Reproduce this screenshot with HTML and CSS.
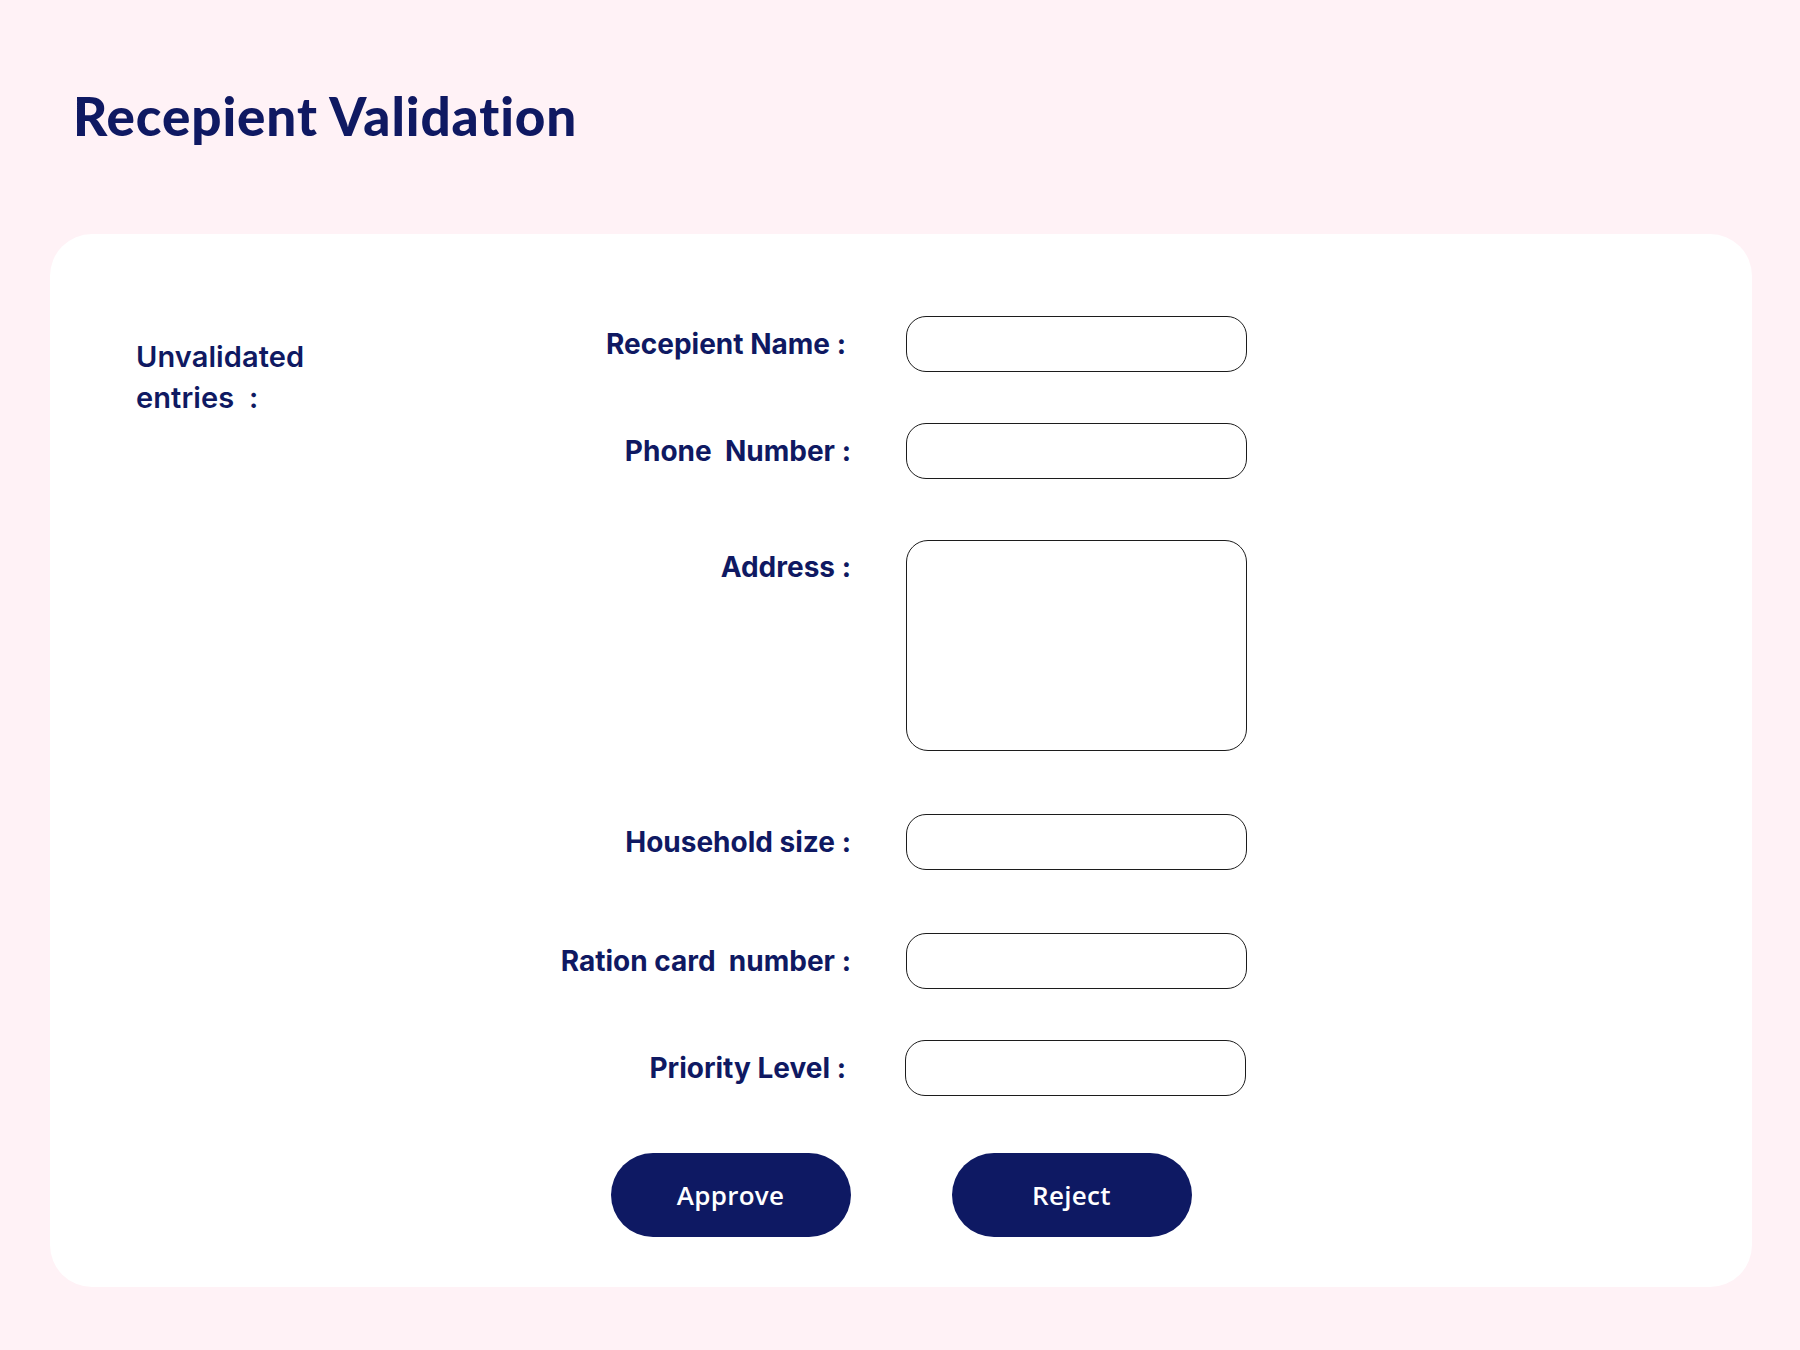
FILE: index.html
```html
<!DOCTYPE html>
<html lang="en">
<head>
<meta charset="utf-8">
<title>Recepient Validation</title>
<link rel="stylesheet" href="styles.css">
</head>
<body>
<div class="page">
  <header class="header">
    <h1 class="title">Recepient Validation</h1>
  </header>
  <main class="card">
    <div class="card-body">
      <div class="side">
        <p class="side-label">Unvalidated<br>entries&nbsp;&nbsp;:</p>
      </div>
      <form class="form">
        <div class="field">
          <label class="label">Recepient Name :</label>
          <input class="box" type="text">
        </div>
        <div class="field">
          <label class="label label-in">Phone&nbsp; Number :</label>
          <input class="box" type="text">
        </div>
        <div class="field field-top">
          <label class="label label-in">Address :</label>
          <textarea class="box box-area"></textarea>
        </div>
        <div class="field field-wide">
          <label class="label label-in">Household size :</label>
          <input class="box" type="text">
        </div>
        <div class="field field-wide">
          <label class="label label-in">Ration card&nbsp; number :</label>
          <input class="box" type="text">
        </div>
        <div class="field">
          <label class="label">Priority Level :</label>
          <input class="box box-shift" type="text">
        </div>
      </form>
    </div>
    <div class="actions">
      <button class="btn" type="button">Approve</button>
      <button class="btn" type="button">Reject</button>
    </div>
  </main>
</div>
</body>
</html>
```
FILE: styles.css
```css
* {
  box-sizing: border-box;
}

html, body {
  margin: 0;
  padding: 0;
}

body {
  background: #fff2f6;
  color: #0f1962;
  font-family: "Inter", "Liberation Sans", sans-serif;
}

.page {
  width: 1800px;
  min-height: 1350px;
  padding: 0 48px 63px 50px;
}

.header {
  height: 234px;
  padding-top: 85px;
}

.title {
  margin: 0 0 0 23px;
  font-family: "Lato", "Liberation Sans", sans-serif;
  font-weight: 900;
  font-size: 53px;
  line-height: 62px;
  color: #0f1962;
  letter-spacing: 0.9px;
}

.card {
  background: #ffffff;
  border-radius: 42px;
  height: 1053px;
  padding: 82px 0 0 86px;
}

.card-body {
  display: flex;
}

.side {
  width: 360px;
  flex: none;
  padding-top: 20px;
}

.side-label {
  margin: 0;
  font-size: 29px;
  font-weight: 600;
  line-height: 41px;
  letter-spacing: 0.1px;
}

.form {
  display: flex;
  flex-direction: column;
}

.field {
  display: grid;
  grid-template-columns: 352px 341px;
  column-gap: 58px;
  align-items: center;
  margin-top: 51px;
}

.field:first-child {
  margin-top: 0;
}

.field-wide {
  margin-top: 63px;
}

.field-top {
  align-items: start;
  margin-top: 61px;
}

.field-top .label {
  margin-top: 10px;
}

.label {
  text-align: right;
  font-size: 28px;
  font-weight: 700;
  line-height: 34px;
  letter-spacing: 0;
  padding-right: 2px;
}

.label-in {
  padding-right: 0;
  margin-right: -3px;
}

.box {
  display: block;
  width: 341px;
  height: 56px;
  border: 1px solid #1c1c1c;
  border-radius: 20px;
  background: #ffffff;
  font: inherit;
  padding: 0 16px;
  outline: none;
}

.box-area {
  height: 211px;
  border-radius: 22px;
  resize: none;
}

.box-shift {
  margin-left: -1px;
}

.actions {
  display: flex;
  justify-content: center;
  gap: 101px;
  margin-top: 57px;
  margin-left: -86px;
}

.btn {
  width: 240px;
  height: 84px;
  border: none;
  border-radius: 42px;
  background: #0e1963;
  color: #ffffff;
  font-family: "Open Sans", "Liberation Sans", sans-serif;
  font-weight: 600;
  font-size: 26px;
  letter-spacing: 0.3px;
  padding: 0;
  cursor: pointer;
}
```
